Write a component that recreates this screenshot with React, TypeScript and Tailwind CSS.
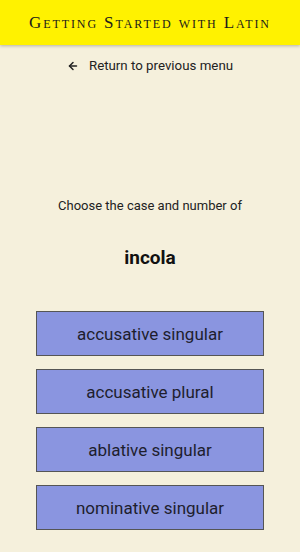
import { ArrowLeft } from 'lucide-react';

const CHOICES = ['accusative singular', 'accusative plural', 'ablative singular', 'nominative singular'];

export default function App() {
  return (
    <div className="min-h-[552px] bg-[#f5f0dc] flex flex-col font-['Roboto',sans-serif]">
      {/* Header */}
      <header className="h-[45px] bg-[#fff200] flex items-center justify-center shadow-[0_1px_3px_rgba(0,0,0,0.25)]">
        <h1 className="font-['Liberation_Serif',serif] text-[17px] tracking-[1.9px] text-[#1a1a1a] [font-variant:small-caps]">
          Getting Started with Latin
        </h1>
      </header>

      {/* Back link */}
      <button className="mt-[11px] flex items-center justify-center gap-[10px] text-[13.3px] text-[#222]">
        <ArrowLeft className="w-[12px] h-[12px]" strokeWidth={3} />
        <span>Return to previous menu</span>
      </button>

      {/* Prompt */}
      <p className="mt-[120px] text-center text-[13px] text-[#222]">Choose the case and number of</p>
      <p className="mt-[29px] text-center text-[19px] font-bold text-[#111]">incola</p>

      {/* Choices */}
      <div className="mt-[38px] flex flex-col gap-[13px] px-[36px]">
        {CHOICES.map((c) => (
          <button
            key={c}
            className="h-[45px] pt-[3px] bg-[#8a95e0] border border-[#555] text-[17px] text-[#1e1e2e] flex items-center justify-center"
          >
            {c}
          </button>
        ))}
      </div>
    </div>
  );
}
